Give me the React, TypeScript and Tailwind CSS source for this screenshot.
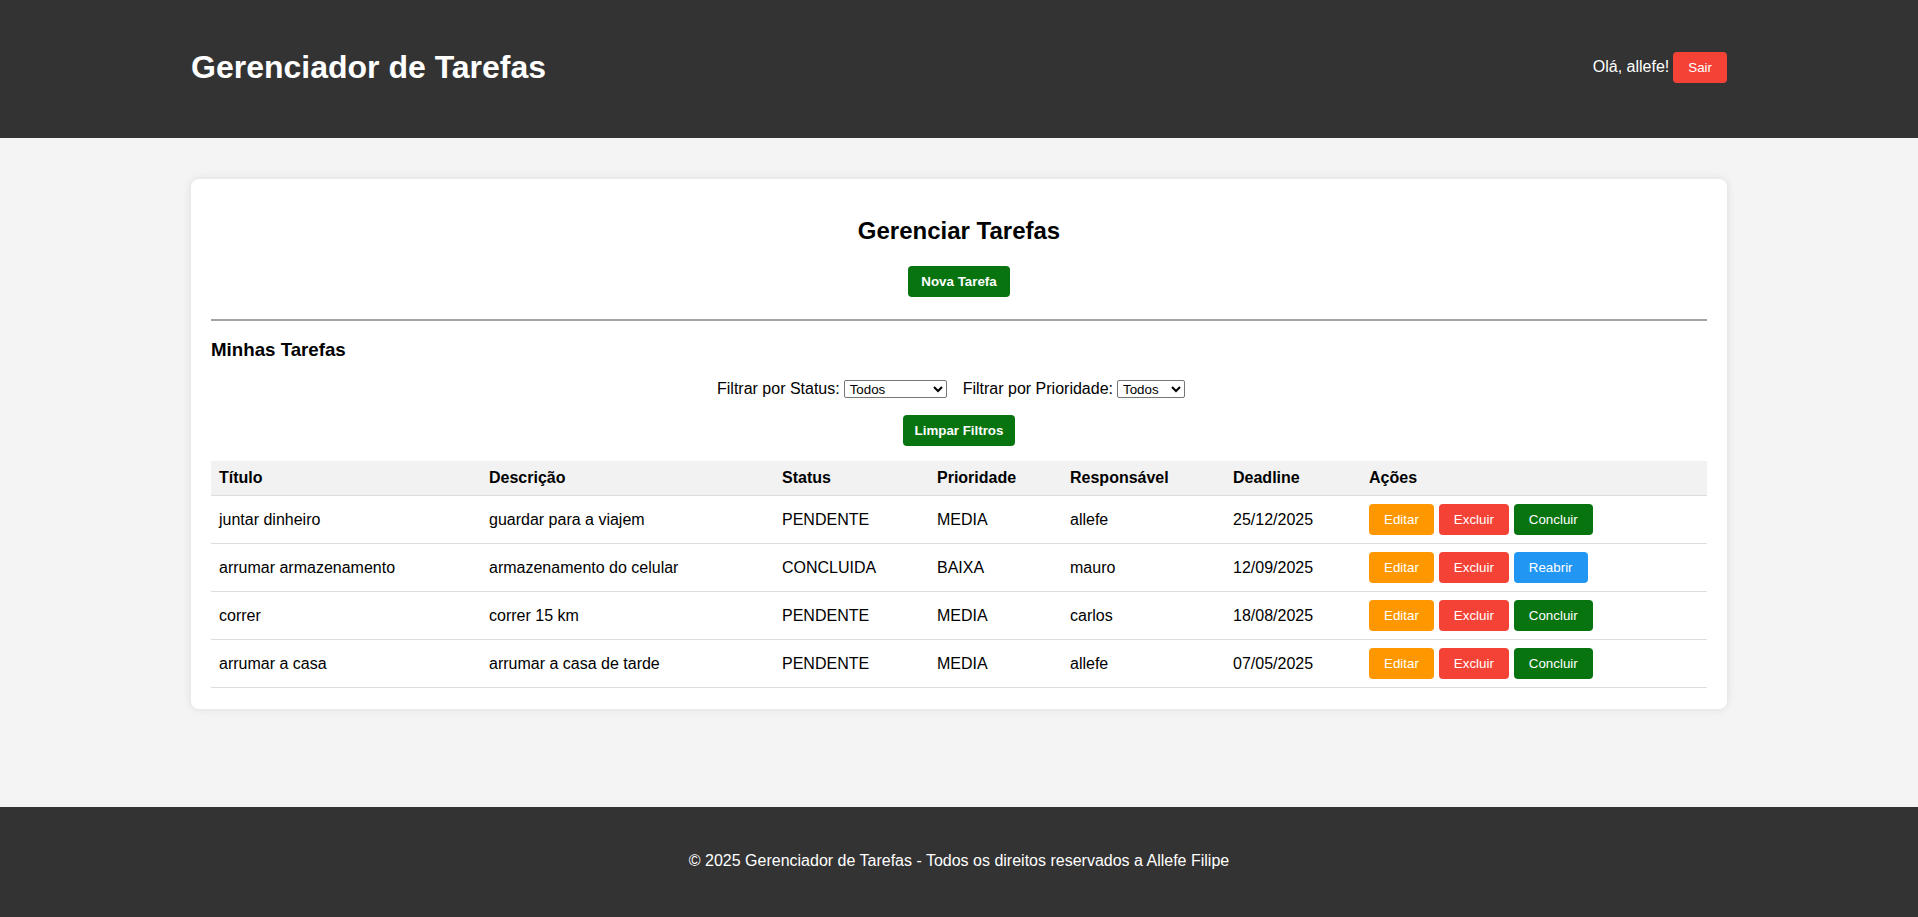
import React from "react";

type Task = {
  titulo: string;
  descricao: string;
  status: string;
  prioridade: string;
  responsavel: string;
  deadline: string;
};

const tasks: Task[] = [
  { titulo: "juntar dinheiro", descricao: "guardar para a viajem", status: "PENDENTE", prioridade: "MEDIA", responsavel: "allefe", deadline: "25/12/2025" },
  { titulo: "arrumar armazenamento", descricao: "armazenamento do celular", status: "CONCLUIDA", prioridade: "BAIXA", responsavel: "mauro", deadline: "12/09/2025" },
  { titulo: "correr", descricao: "correr 15 km", status: "PENDENTE", prioridade: "MEDIA", responsavel: "carlos", deadline: "18/08/2025" },
  { titulo: "arrumar a casa", descricao: "arrumar a casa de tarde", status: "PENDENTE", prioridade: "MEDIA", responsavel: "allefe", deadline: "07/05/2025" },
];

const btn = "h-[31px] px-[15px] rounded-[4px] text-white text-[13.33px] leading-[15px] cursor-pointer";

export default function App() {
  return (
    <div className="min-h-screen flex flex-col bg-[#f4f4f4] text-black" style={{ fontFamily: '"Liberation Sans", Arial, sans-serif' }}>
      <header className="bg-[#333333] h-[138px] flex-none">
        <div className="w-[1536px] mx-auto h-full flex items-center justify-between">
          <h1 className="text-white text-[32px] font-bold leading-[37px] -mt-[4px]">Gerenciador de Tarefas</h1>
          <div className="flex items-center -mt-[4px]">
            <span className="text-white text-[16px] mr-[4px]">Olá, allefe!</span>
            <button className={`${btn} bg-[#f44336]`}>Sair</button>
          </div>
        </div>
      </header>

      <main className="flex-1 pt-[41px]">
        <div className="w-[1536px] mx-auto bg-white rounded-[8px] shadow-[0_0_10px_rgba(0,0,0,0.1)] px-[20px] pt-[20px] pb-[21px]">
          <h2 className="text-center text-[24px] font-bold leading-[28px] mt-[18px]">Gerenciar Tarefas</h2>
          <div className="flex justify-center mt-[21px]">
            <button className="h-[31px] px-[13px] rounded-[4px] bg-[#07740f] text-white text-[13.33px] font-bold">Nova Tarefa</button>
          </div>
          <div className="h-[2px] bg-[#a3a3a3] mt-[22px]" />
          <h3 className="text-[18.72px] font-bold leading-[22px] mt-[18px]">Minhas Tarefas</h3>
          <div className="flex justify-center items-center mt-[19px] text-[16px] leading-[18px]">
            <label>Filtrar por Status:</label>
            <select className="ml-[4px] w-[103px] h-[18px] border border-[#767676] rounded-[2px] bg-white text-[13.33px] leading-[15px] px-[1px]">
              <option>Todos</option>
              <option>PENDENTE</option>
              <option>CONCLUIDA</option>
            </select>
            <label className="ml-[16px]">Filtrar por Prioridade:</label>
            <select className="ml-[4px] mr-[16px] w-[68px] h-[18px] border border-[#767676] rounded-[2px] bg-white text-[13.33px] leading-[15px] px-[1px]">
              <option>Todos</option>
              <option>ALTA</option>
              <option>MEDIA</option>
              <option>BAIXA</option>
            </select>
          </div>
          <div className="flex justify-center mt-[17px]">
            <button className="h-[31px] px-[12px] rounded-[4px] bg-[#07740f] text-white text-[13.33px] font-bold">Limpar Filtros</button>
          </div>
          <table className="w-full table-fixed border-collapse mt-[15px] text-[16px]">
            <colgroup>
              <col className="w-[270px]" />
              <col className="w-[293px]" />
              <col className="w-[155px]" />
              <col className="w-[133px]" />
              <col className="w-[163px]" />
              <col className="w-[136px]" />
              <col />
            </colgroup>
            <thead>
              <tr className="bg-[#f2f2f2]">
                {["Título", "Descrição", "Status", "Prioridade", "Responsável", "Deadline", "Ações"].map((h) => (
                  <th key={h} className="text-left font-bold px-[8px] py-[8px] leading-[18px] border-b border-[#dddddd]">{h}</th>
                ))}
              </tr>
            </thead>
            <tbody>
              {tasks.map((t) => (
                <tr key={t.titulo}>
                  <td className="px-[8px] py-[8px] border-b border-[#dddddd]">{t.titulo}</td>
                  <td className="px-[8px] py-[8px] border-b border-[#dddddd]">{t.descricao}</td>
                  <td className="px-[8px] py-[8px] border-b border-[#dddddd]">{t.status}</td>
                  <td className="px-[8px] py-[8px] border-b border-[#dddddd]">{t.prioridade}</td>
                  <td className="px-[8px] py-[8px] border-b border-[#dddddd]">{t.responsavel}</td>
                  <td className="px-[8px] py-[8px] border-b border-[#dddddd]">{t.deadline}</td>
                  <td className="px-[8px] py-[8px] border-b border-[#dddddd]">
                    <div className="flex gap-[5px]">
                      <button className={`${btn} bg-[#ff9800]`}>Editar</button>
                      <button className={`${btn} bg-[#f44336]`}>Excluir</button>
                      {t.status === "CONCLUIDA" ? (
                        <button className={`${btn} bg-[#2196f3]`}>Reabrir</button>
                      ) : (
                        <button className={`${btn} bg-[#07740f]`}>Concluir</button>
                      )}
                    </div>
                  </td>
                </tr>
              ))}
            </tbody>
          </table>
        </div>
      </main>

      <footer className="bg-[#333333] h-[110px] flex-none flex items-center justify-center">
        <p className="text-white text-[16px] -mt-[2px]">© 2025 Gerenciador de Tarefas - Todos os direitos reservados a Allefe Filipe</p>
      </footer>
    </div>
  );
}
